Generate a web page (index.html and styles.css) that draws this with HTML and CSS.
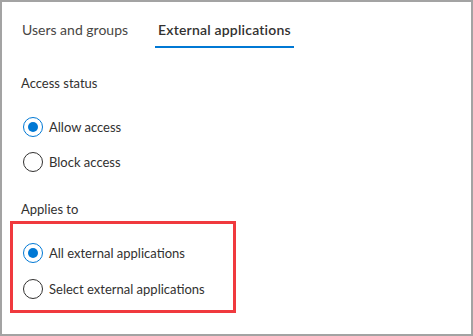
FILE: index.html
```html
<!DOCTYPE html>
<html lang="en">
<head>
    <meta charset="UTF-8">
    <meta name="viewport" content="width=device-width, initial-scale=1.0">
    <title>External applications</title>
    <link rel="stylesheet" href="styles.css">
</head>
<body>

    <div class="panel">
        <div class="tabs">
            <div class="tab">Users and groups</div>
            <div class="tab active">External applications</div>
        </div>

        <div class="section-label first">Access status</div>
        <div class="options">
            <label class="option">
                <input type="radio" name="access" value="allow" checked>
                <span>Allow access</span>
            </label>
            <label class="option">
                <input type="radio" name="access" value="block">
                <span>Block access</span>
            </label>
        </div>

        <div class="section-label">Applies to</div>
        <div class="options highlight">
            <label class="option wide">
                <input type="radio" name="applies" value="all" checked>
                <span>All external applications</span>
            </label>
            <label class="option wide">
                <input type="radio" name="applies" value="select">
                <span>Select external applications</span>
            </label>
        </div>
    </div>

</body>
</html>
```

FILE: styles.css
```css
body {
    margin: 0;
    font-family: 'Lato', 'Liberation Sans', sans-serif;
    font-size: 13px;
    color: #323130;
    background-color: #fff;
}

.panel {
    width: 473px;
    height: 336px;
    box-sizing: border-box;
    border: 2px solid #a3a3a3;
    background-color: #fff;
}

.tabs {
    display: flex;
    gap: 24px;
    padding: 18px 0 0 17px;
}

.tab {
    padding: 0 3px 6px;
    font-size: 14px;
    line-height: 20px;
    color: #484644;
    border-bottom: 2px solid transparent;
}

.tab.active {
    color: #323130;
    font-weight: 600;
    letter-spacing: 0.2px;
    border-bottom-color: #0078d4;
}

.section-label {
    line-height: 20px;
    padding-left: 19px;
    margin-top: 20px;
}

.section-label.first {
    margin-top: 25px;
}

.options {
    display: flex;
    flex-direction: column;
    margin-top: 16px;
    padding-left: 21px;
}

.option {
    display: flex;
    align-items: center;
    gap: 6px;
    height: 35px;
    cursor: pointer;
}

.option input {
    appearance: none;
    -webkit-appearance: none;
    margin: 0;
    width: 20px;
    height: 20px;
    border: 1px solid #323130;
    border-radius: 50%;
    box-sizing: border-box;
    display: grid;
    place-items: center;
}

.option input:checked {
    border: 1.5px solid #0078d4;
}

.option input:checked::before {
    content: "";
    width: 10px;
    height: 10px;
    border-radius: 50%;
    background-color: #0078d4;
}

.highlight {
    width: 226px;
    box-sizing: border-box;
    margin: 2px 0 0 8px;
    padding: 11px 0 3px 10px;
    border: 3px solid #f0393e;
}

.option.wide {
    height: 36px;
}
```
